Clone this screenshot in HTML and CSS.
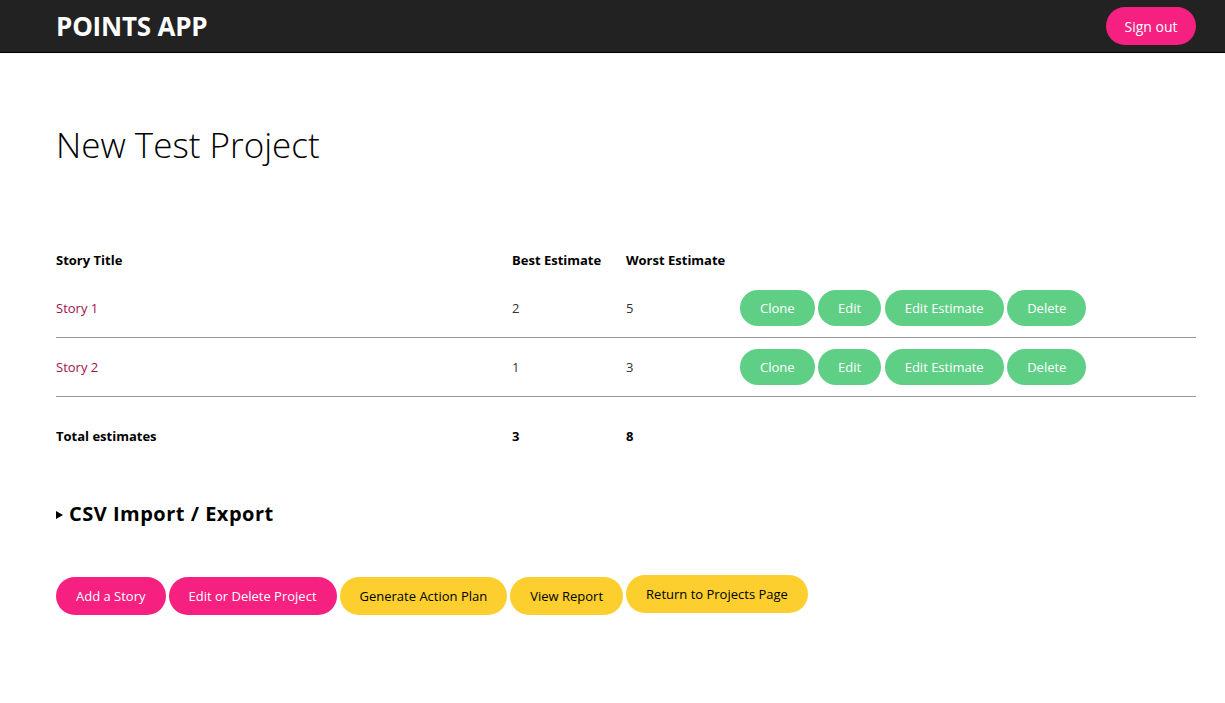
FILE: index.html
```html
<!DOCTYPE html>
<html>
<head>
<meta charset="utf-8">
<link rel="stylesheet" href="styles.css">
</head>
<body>
<header class="topbar">
  <div class="brand">POINTS APP</div>
  <button class="btn btn-pink signout">Sign out</button>
</header>
<main class="page">
  <h1 class="title">New Test Project</h1>
  <table class="stories">
    <thead>
      <tr class="head-row">
        <th class="c-title">Story Title</th>
        <th class="c-num">Best Estimate</th>
        <th class="c-num">Worst Estimate</th>
        <th class="c-actions"></th>
      </tr>
    </thead>
    <tbody>
      <tr class="story-row">
        <td><a class="story-link" href="#">Story 1</a></td>
        <td>2</td>
        <td>5</td>
        <td class="actions"><button class="btn btn-green">Clone</button> <button class="btn btn-green">Edit</button> <button class="btn btn-green">Edit Estimate</button> <button class="btn btn-green">Delete</button></td>
      </tr>
      <tr class="story-row">
        <td><a class="story-link" href="#">Story 2</a></td>
        <td>1</td>
        <td>3</td>
        <td class="actions"><button class="btn btn-green">Clone</button> <button class="btn btn-green">Edit</button> <button class="btn btn-green">Edit Estimate</button> <button class="btn btn-green">Delete</button></td>
      </tr>
      <tr class="total-row">
        <td>Total estimates</td>
        <td>3</td>
        <td>8</td>
        <td></td>
      </tr>
    </tbody>
  </table>
  <details class="csv">
    <summary><h3 class="csv-title">CSV Import / Export</h3></summary>
  </details>
  <div class="bottom-actions">
    <button class="btn btn-pink big">Add a Story</button>
    <button class="btn btn-pink big">Edit or Delete Project</button>
    <button class="btn btn-yellow big">Generate Action Plan</button>
    <button class="btn btn-yellow big">View Report</button>
    <a class="btn btn-yellow big link-btn" href="#">Return to Projects Page</a>
  </div>
</main>
</body>
</html>
```
FILE: styles.css
```css
* { box-sizing: border-box; }
body {
  margin: 0;
  font-family: "Open Sans", "Noto Sans", sans-serif;
  color: #000;
  background: #fff;
}
.topbar {
  height: 53px;
  background: #222222;
  border-bottom: 1px solid #000;
  display: flex;
  align-items: center;
  justify-content: space-between;
  padding: 0 29px 0 56px;
}
.brand {
  color: #fff;
  font-weight: 700;
  font-size: 26px;
  letter-spacing: -0.2px;
  margin-top: -1px;
}
.btn {
  border: 0;
  border-radius: 999px;
  font-family: "Open Sans", "Noto Sans", sans-serif;
  font-size: 13px;
  cursor: pointer;
  display: inline-flex;
  align-items: center;
  justify-content: center;
  text-decoration: none;
}
.btn-pink { background: #f5207f; color: #fff; }
.btn-green { background: #5fcf85; color: #fff; height: 36px; padding: 0 20px; }
.btn-yellow { background: #fdcf2e; color: #000; }
.signout {
  height: 38px;
  width: 90px;
  font-size: 14px;
}
.page {
  padding: 0 29px 0 56px;
}
.title {
  margin: 0;
  padding-top: 69px;
  font-weight: 300;
  font-size: 35px;
  line-height: 46px;
  height: 190px;
}
.stories {
  width: 100%;
  border-collapse: collapse;
  font-size: 13px;
}
.stories th {
  text-align: left;
  font-weight: 700;
  height: 36px;
  padding: 0 0 2px;
  vertical-align: middle;
}
.c-title { width: 456px; }
.c-num { width: 114px; }
.stories td {
  padding: 0;
  vertical-align: middle;
}
.story-row td {
  height: 59px;
  border-bottom: 1px solid #999;
  color: #333;
}
.story-row:first-child td { height: 58px; }
.story-link { color: #a0104f; text-decoration: none; }
.actions { font-size: 0; }
.actions .btn { margin-right: 3.5px; }
.total-row td {
  height: 79px;
  font-weight: 700;
}
.csv { margin-top: 25px; }
.csv summary {
  list-style: none;
  display: flex;
  align-items: center;
  cursor: pointer;
}
.csv summary::-webkit-details-marker { display: none; }
.csv summary::before {
  content: "";
  width: 0; height: 0;
  border-left: 7px solid #000;
  border-top: 4px solid transparent;
  border-bottom: 4px solid transparent;
  margin-right: 6px;
  margin-top: 2px;
}
.csv-title {
  margin: 0;
  font-size: 20px;
  font-weight: 700;
  letter-spacing: 0.5px;
  line-height: 28px;
}
.bottom-actions {
  margin-top: 47px;
  display: flex;
  align-items: flex-start;
  gap: 3px;
}
.big { height: 38px; padding: 0 20px; margin-top: 2px; }
.link-btn { margin-top: 0; }
```
